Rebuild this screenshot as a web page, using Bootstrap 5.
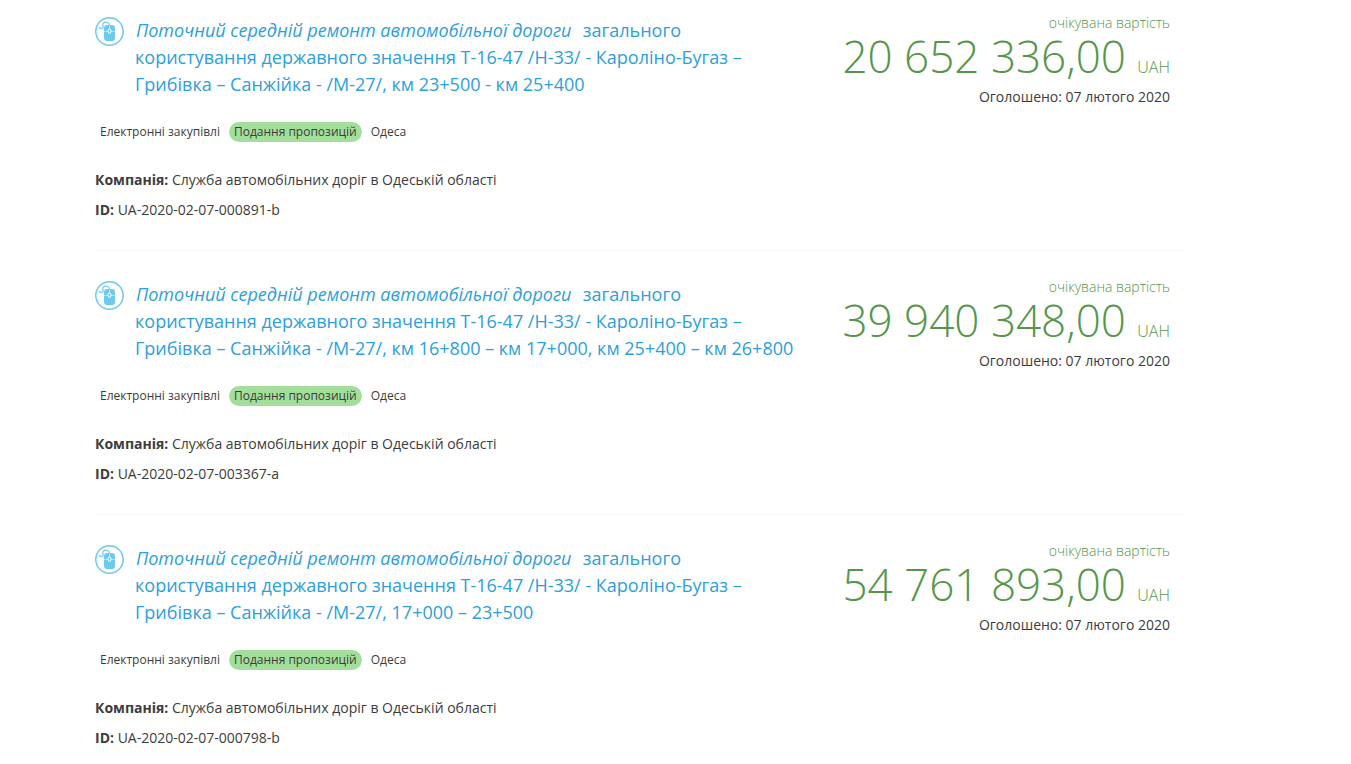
<!DOCTYPE html>
<html lang="uk">
<head>
<meta charset="utf-8">
<meta name="viewport" content="width=device-width, initial-scale=1">
<title>Закупівлі</title>
<link href="https://cdn.jsdelivr.net/npm/bootstrap@5.3.0/dist/css/bootstrap.min.css" rel="stylesheet">
<style>
body{font-family:"Open Sans","Noto Sans",sans-serif;font-size:14px;line-height:20px;color:#3c3c3c}
.tenders{max-width:1120px;padding:0 15px;margin-left:80px}
.tender{padding:30px 15px 30px 0;border-bottom:1px solid #f7f7f7}
.tender:first-child{padding-top:17px}
.tender:last-child{padding-bottom:0;border-bottom:0}
.tender-head{padding-right:10px;gap:11px}
.tender-icon{width:29px;height:29px}
.tender-title{font-size:18px;line-height:27px;font-weight:400}
.tender-title a{color:#2d9fd9;text-decoration:none}
.tender-title a:hover{text-decoration:underline}
.tender-title em{margin:0 2px 0 1px}
.tags{font-size:12px;line-height:20px;gap:4px;margin:24px 0 28px}
.tag{padding:0 5px;border-radius:10px}
.tag-active{background:#a3df9b}
.facts p{margin:0 0 10px}
.facts p:last-child{margin:0}
.price-box{margin-top:-4px}
.price{color:#55964a;font-weight:300}
.amount{font-size:44px;line-height:46px;margin-bottom:8px}
.currency{font-size:16px;line-height:16px}
</style>
</head>
<body>
<svg class="d-none">
<symbol id="mouse" viewBox="0 0 29 29">
<circle cx="14.500" cy="14.500" r="13.700" fill="none" stroke="#6fc9ed" stroke-width="1.500"/>
<path d="M4 9.800C5.500 12 8 11.800 8.200 9.800C8.300 8.200 6.800 7.500 8.300 6.200C10 4.800 14.300 4.300 14.500 8.400" fill="none" stroke="#6fc9ed" stroke-width="1.200"/>
<path d="M14.200 7.900H11.700Q9 8.200 9 11V14H12.500Q12.500 12.200 14.200 11.700ZM14.800 7.900H17.300Q20 8.200 20 11V14H16.500Q16.500 12.200 14.800 11.700ZM9 14.600H12.500Q12.700 16.800 14.500 16.800Q16.300 16.800 16.500 14.600H20V20.800Q20 24.200 16.500 24.200H12.500Q9 24.200 9 20.800Z" fill="#6fc9ed"/>
<rect x="13.600" y="12.500" width="1.800" height="3.500" rx=".9" fill="#6fc9ed"/>
</symbol>
</svg>
<main class="tenders">
<article class="tender row g-0">
<div class="col-8">
<div class="tender-head d-flex"><svg class="tender-icon flex-shrink-0" aria-hidden="true"><use href="#mouse"/></svg>
<h2 class="tender-title mb-0"><a href="#"><em>Поточний середній ремонт автомобільної дороги</em>&nbsp; загального користування державного значення Т-16-47 /Н-33/ - Кароліно-Бугаз – Грибівка – Санжійка - /М-27/, км 23+500 - км 25+400</a></h2></div>
<div class="tags d-flex"><span class="tag">Електронні закупівлі</span><span class="tag tag-active">Подання пропозицій</span><span class="tag">Одеса</span></div>
<div class="facts"><p><strong>Компанія:</strong> Служба автомобільних доріг в Одеській області</p>
<p><strong>ID:</strong> UA-2020-02-07-000891-b</p></div>
</div>
<div class="col-4 text-end"><div class="price-box"><div class="price">очікувана вартість</div><div class="price amount">20 652 336,00 <span class="currency">UAH</span></div><div>Оголошено: 07 лютого 2020</div></div></div>
</article>
<article class="tender row g-0">
<div class="col-8">
<div class="tender-head d-flex"><svg class="tender-icon flex-shrink-0" aria-hidden="true"><use href="#mouse"/></svg>
<h2 class="tender-title mb-0"><a href="#"><em>Поточний середній ремонт автомобільної дороги</em>&nbsp; загального користування державного значення Т-16-47 /Н-33/ - Кароліно-Бугаз – Грибівка – Санжійка - /М-27/, км 16+800 – км 17+000, км 25+400 – км 26+800</a></h2></div>
<div class="tags d-flex"><span class="tag">Електронні закупівлі</span><span class="tag tag-active">Подання пропозицій</span><span class="tag">Одеса</span></div>
<div class="facts"><p><strong>Компанія:</strong> Служба автомобільних доріг в Одеській області</p>
<p><strong>ID:</strong> UA-2020-02-07-003367-a</p></div>
</div>
<div class="col-4 text-end"><div class="price-box"><div class="price">очікувана вартість</div><div class="price amount">39 940 348,00 <span class="currency">UAH</span></div><div>Оголошено: 07 лютого 2020</div></div></div>
</article>
<article class="tender row g-0">
<div class="col-8">
<div class="tender-head d-flex"><svg class="tender-icon flex-shrink-0" aria-hidden="true"><use href="#mouse"/></svg>
<h2 class="tender-title mb-0"><a href="#"><em>Поточний середній ремонт автомобільної дороги</em>&nbsp; загального користування державного значення Т-16-47 /Н-33/ - Кароліно-Бугаз – Грибівка – Санжійка - /М-27/, 17+000 – 23+500</a></h2></div>
<div class="tags d-flex"><span class="tag">Електронні закупівлі</span><span class="tag tag-active">Подання пропозицій</span><span class="tag">Одеса</span></div>
<div class="facts"><p><strong>Компанія:</strong> Служба автомобільних доріг в Одеській області</p>
<p><strong>ID:</strong> UA-2020-02-07-000798-b</p></div>
</div>
<div class="col-4 text-end"><div class="price-box"><div class="price">очікувана вартість</div><div class="price amount">54 761 893,00 <span class="currency">UAH</span></div><div>Оголошено: 07 лютого 2020</div></div></div>
</article>
</main>
<script src="https://cdn.jsdelivr.net/npm/bootstrap@5.3.0/dist/js/bootstrap.bundle.min.js"></script>
</body>
</html>
